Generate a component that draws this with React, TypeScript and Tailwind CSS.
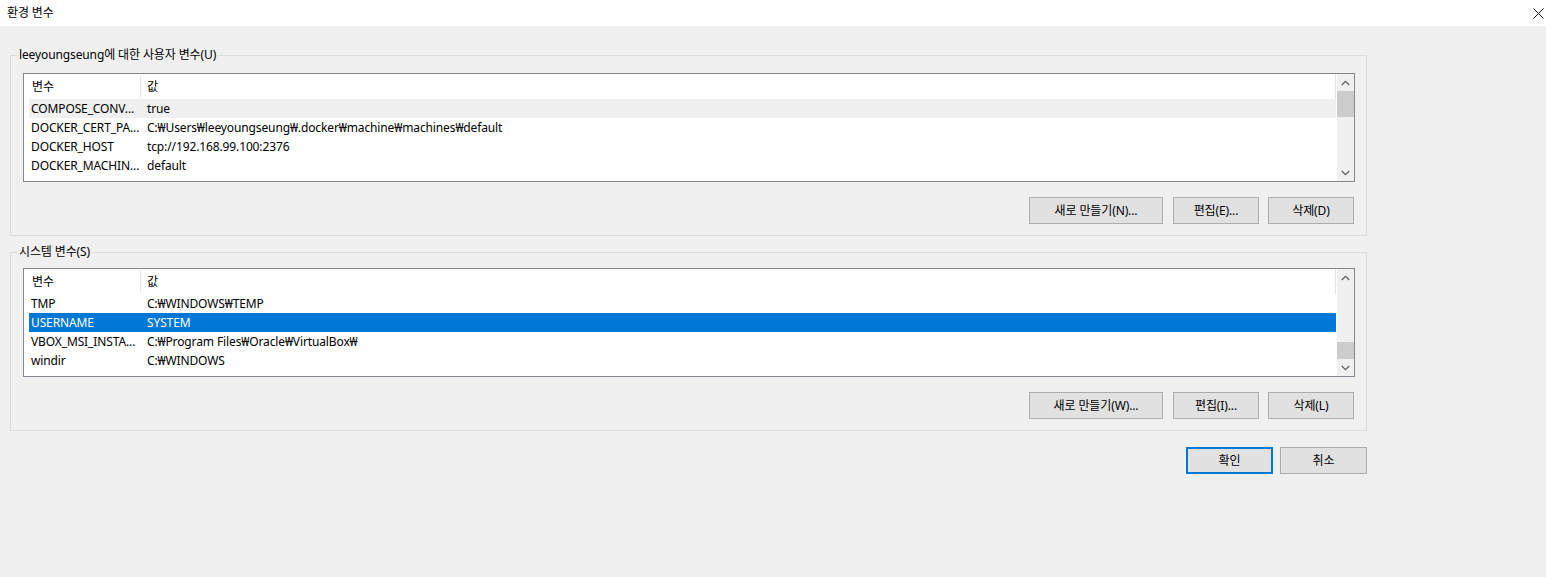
import React from "react";

interface Row {
  name: string;
  value: string;
  state?: "hover" | "selected";
}

const userRows: Row[] = [
  { name: "COMPOSE_CONV...", value: "true", state: "hover" },
  { name: "DOCKER_CERT_PA...", value: "C:₩Users₩leeyoungseung₩.docker₩machine₩machines₩default" },
  { name: "DOCKER_HOST", value: "tcp://192.168.99.100:2376" },
  { name: "DOCKER_MACHIN...", value: "default" },
];

const systemRows: Row[] = [
  { name: "TMP", value: "C:₩WINDOWS₩TEMP" },
  { name: "USERNAME", value: "SYSTEM", state: "selected" },
  { name: "VBOX_MSI_INSTA...", value: "C:₩Program Files₩Oracle₩VirtualBox₩" },
  { name: "windir", value: "C:₩WINDOWS" },
];

function Arrow({ up }: { up?: boolean }) {
  return (
    <div className="h-[17px] flex items-center justify-center">
      <svg width="9" height="6" viewBox="0 0 9 6" fill="none" stroke="#606060" strokeWidth="1.3">
        {up ? <polyline points="0.8,5 4.5,1.3 8.2,5" /> : <polyline points="0.8,1 4.5,4.7 8.2,1" />}
      </svg>
    </div>
  );
}

function VarList({ rows, thumbAtEnd, thumbH }: { rows: Row[]; thumbAtEnd?: boolean; thumbH: string }) {
  return (
    <div className="w-[1332px] h-[109px] border border-[#828790] bg-white flex">
      <div className="flex-1 pl-[5px] pr-[1px]">
        <div className="h-[25px] flex items-center border-r border-[#e5e5e5]">
          <div className="w-[111px] pl-[3px]">변수</div>
          <div className="w-px h-[21px] bg-[#e5e5e5]" />
          <div className="pl-[6px]">값</div>
        </div>
        {rows.map((r) => (
          <div
            key={r.name}
            className={`h-[19px] flex items-center ${
              r.state === "selected" ? "bg-[#0078d7] text-white" : r.state === "hover" ? "bg-[#f0f0f0]" : ""
            }`}
          >
            <div className="w-[112px] pl-[2px] whitespace-nowrap overflow-hidden">{r.name}</div>
            <div className="pl-[6px] whitespace-nowrap">{r.value}</div>
          </div>
        ))}
      </div>
      <div className="w-[17px] bg-[#f0f0f0] flex flex-col">
        <Arrow up />
        <div className={`flex-1 flex flex-col ${thumbAtEnd ? "justify-end" : ""}`}>
          <div className={`${thumbH} bg-[#cdcdcd]`} />
        </div>
        <Arrow />
      </div>
    </div>
  );
}

function Btn({ children, w, primary }: { children: React.ReactNode; w: string; primary?: boolean }) {
  return (
    <button
      className={`${w} h-[27px] bg-[#e1e1e1] flex items-center justify-center ${
        primary ? "border-2 border-[#0078d7]" : "border border-[#adadad]"
      }`}
    >
      {children}
    </button>
  );
}

function Group({
  title,
  rows,
  thumbAtEnd,
  thumbH,
  buttons,
  pt,
}: {
  title: string;
  rows: Row[];
  thumbAtEnd?: boolean;
  thumbH: string;
  buttons: string[];
  pt: string;
}) {
  return (
    <fieldset className={`w-[1357px] border border-[#dcdcdc] pl-[6px] pr-[11px] ${pt} pb-[11px]`}>
      <legend className="px-[2px] leading-[16px]">{title}</legend>
      <div className="ml-[6px]">
        <VarList rows={rows} thumbAtEnd={thumbAtEnd} thumbH={thumbH} />
        <div className="mt-[15px] flex justify-end pr-[1px]">
          <Btn w="w-[134px]">{buttons[0]}</Btn>
          <div className="w-[10px]" />
          <Btn w="w-[86px]">{buttons[1]}</Btn>
          <div className="w-[9px]" />
          <Btn w="w-[86px]">{buttons[2]}</Btn>
        </div>
      </div>
    </fieldset>
  );
}

export default function App() {
  return (
    <div
      className="w-[1546px] h-[577px] bg-[#f0f0f0] text-[12px] tracking-[-0.12px] text-black overflow-hidden"
      style={{ fontFamily: '"Noto Sans", "Noto Sans CJK KR", sans-serif' }}
    >
      <div className="h-[26px] bg-white flex items-center justify-between pl-[7px] pr-[2px]">
        <span>환경 변수</span>
        <svg width="11" height="11" viewBox="0 0 11 11" stroke="#111" strokeWidth="1">
          <line x1="0.5" y1="0.5" x2="10.5" y2="10.5" />
          <line x1="10.5" y1="0.5" x2="0.5" y2="10.5" />
        </svg>
      </div>
      <div className="pl-[10px] pt-[21px]">
        <Group
          title="leeyoungseung에 대한 사용자 변수(U)"
          rows={userRows}
          thumbH="h-[26px]"
          pt="pt-[10px]"
          buttons={["새로 만들기(N)...", "편집(E)...", "삭제(D)"]}
        />
        <div className="mt-[8px]">
          <Group
            title="시스템 변수(S)"
            rows={systemRows}
            thumbAtEnd
            thumbH="h-[17px]"
            pt="pt-[8px]"
            buttons={["새로 만들기(W)...", "편집(I)...", "삭제(L)"]}
          />
        </div>
        <div className="w-[1357px] mt-[16px] flex justify-end gap-[7px]">
          <Btn w="w-[87px]" primary>
            확인
          </Btn>
          <Btn w="w-[87px]">취소</Btn>
        </div>
      </div>
    </div>
  );
}
